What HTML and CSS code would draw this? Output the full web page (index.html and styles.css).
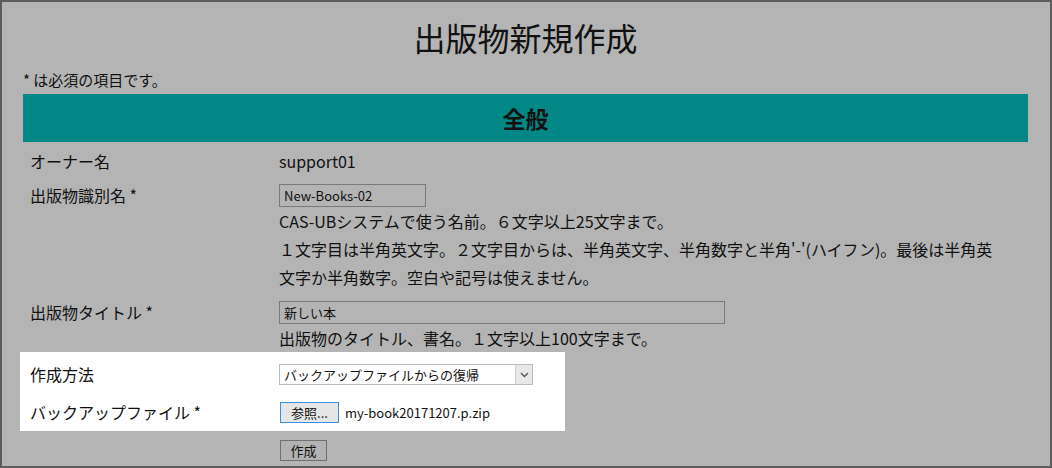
FILE: index.html
```html
<!DOCTYPE html>
<html lang="ja">
<head>
    <meta charset="UTF-8">
    <meta name="viewport" content="width=device-width, initial-scale=1.0">
    <title>出版物新規作成</title>
    <link rel="stylesheet" href="styles.css">
</head>
<body>
    <div class="page">
        <h1 class="page-title">出版物新規作成</h1>
        <p class="note">* は必須の項目です。</p>

        <h2 class="section-title">全般</h2>

        <form class="form">
            <div class="row row-text">
                <div class="row-label">オーナー名</div>
                <div class="row-value">support01</div>
            </div>

            <div class="row">
                <label class="row-label">出版物識別名 *</label>
                <div class="row-value">
                    <input type="text" class="text-input input-short" value="New-Books-02">
                    <p class="help">CAS-UBシステムで使う名前。６文字以上25文字まで。<br>１文字目は半角英文字。２文字目からは、半角英文字、半角数字と半角'-'(ハイフン)。最後は半角英文字か半角数字。空白や記号は使えません。</p>
                </div>
            </div>

            <div class="row">
                <label class="row-label">出版物タイトル *</label>
                <div class="row-value">
                    <input type="text" class="text-input input-long" value="新しい本">
                    <p class="help">出版物のタイトル、書名。１文字以上100文字まで。</p>
                </div>
            </div>

            <div class="highlight">
                <div class="row row-method">
                    <label class="row-label label-select">作成方法</label>
                    <div class="row-value">
                        <span class="select-wrap">
                            <select class="select">
                                <option>バックアップファイルからの復帰</option>
                                <option>新規作成</option>
                            </select>
                            <span class="select-arrow">
                                <svg width="9" height="6" viewBox="0 0 9 6">
                                    <path d="M1 1l3.5 3.5L8 1" fill="none" stroke="#555" stroke-width="1.3"/>
                                </svg>
                            </span>
                        </span>
                    </div>
                </div>

                <div class="row row-file">
                    <label class="row-label label-file">バックアップファイル *</label>
                    <div class="row-value file-field">
                        <button type="button" class="file-button">参照...</button>
                        <span class="file-name">my-book20171207.p.zip</span>
                    </div>
                </div>
            </div>

            <div class="row row-submit">
                <div class="row-label"></div>
                <div class="row-value">
                    <button type="submit" class="submit-button">作成</button>
                </div>
            </div>
        </form>
    </div>
</body>
</html>
```

FILE: styles.css
```css
:root {
    --bg-page: #b4b4b4;
    --frame: #5c5c5c;
    --teal: #008786;
    --text: #111111;
    --label-width: 256px;
}

* {
    margin: 0;
    padding: 0;
    box-sizing: border-box;
}

html,
body {
    height: 100%;
}

body {
    font-family: "Noto Sans CJK JP", "Noto Sans", sans-serif;
    font-size: 16px;
    color: var(--text);
    background-color: var(--bg-page);
    border: 2px solid var(--frame);
    overflow: hidden;
}

.page {
    padding: 0 22px 0 21px;
}

.page-title {
    margin-top: 11px;
    font-size: 32px;
    line-height: 48px;
    font-weight: normal;
    text-align: center;
}

.note {
    margin-top: 8px;
    margin-bottom: 3px;
    font-size: 15px;
    line-height: 22px;
}

.section-title {
    background-color: var(--teal);
    font-size: 23px;
    line-height: 48px;
    font-weight: bold;
    text-align: center;
}

.row {
    display: flex;
    align-items: flex-start;
    padding-top: 10px;
}

.row-label {
    width: var(--label-width);
    flex-shrink: 0;
    padding-left: 7px;
    line-height: 23px;
}

.row-value {
    flex: 1;
}

.row-text {
    padding-top: 6px;
}

.row-text .row-label,
.row-text .row-value {
    line-height: 26px;
}

.text-input {
    display: block;
    height: 23px;
    padding: 0 4px;
    border: 1px solid #7a7a7a;
    background-color: transparent;
    font-family: inherit;
    font-size: 13px;
    color: var(--text);
}

.input-short {
    width: 147px;
}

.input-long {
    width: 446px;
}

.help {
    max-width: 720px;
    line-height: 28px;
}

/* ハイライト部分 */
.highlight {
    width: 545px;
    margin-left: -3px;
    padding: 0 0 8px 3px;
    background-color: #ffffff;
}

.row-method {
    padding-top: 12px;
}

.label-select {
    line-height: 21px;
}

.select-wrap {
    position: relative;
    display: inline-block;
    vertical-align: top;
}

.select {
    display: block;
    width: 254px;
    height: 21px;
    padding: 0 20px 0 4px;
    border: 1px solid #bcbcbc;
    background-color: #ffffff;
    font-family: inherit;
    font-size: 13px;
    color: var(--text);
    appearance: none;
    -webkit-appearance: none;
    outline: none;
}

.select-arrow {
    position: absolute;
    top: 1px;
    right: 1px;
    width: 17px;
    height: 19px;
    display: flex;
    align-items: center;
    justify-content: center;
    background-color: #e8e8e8;
    border-left: 1px solid #cfcfcf;
    pointer-events: none;
}

.row-file {
    padding-top: 14px;
}

.label-file {
    line-height: 21px;
}

.file-field {
    display: flex;
    align-items: center;
    gap: 6px;
    padding-left: 1px;
}

.file-button {
    width: 59px;
    height: 21px;
    border: 1px solid #3b8fe0;
    background-color: #e6e6e6;
    font-family: inherit;
    font-size: 13px;
    color: var(--text);
    cursor: pointer;
}

.file-name {
    font-size: 13px;
}

.row-submit {
    padding-top: 6px;
}

.row-submit .row-value {
    padding-left: 1px;
}

.submit-button {
    width: 47px;
    height: 21px;
    border: 1px solid #707070;
    background-color: #b2b2b2;
    font-family: inherit;
    font-size: 13px;
    color: var(--text);
    cursor: pointer;
}
```
